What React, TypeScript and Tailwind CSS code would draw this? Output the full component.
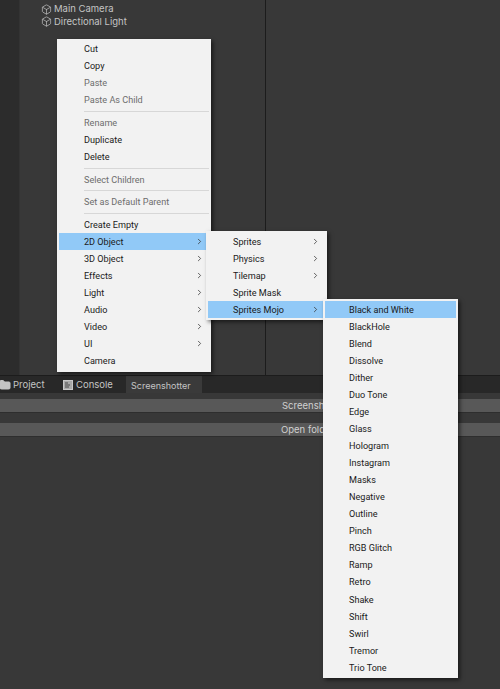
import { Box, Folder, ChevronRight } from 'lucide-react';

type Row = { label: string; dim?: boolean; arrow?: boolean; active?: boolean } | 'sep' | 'sep-thin';

const mainMenu: Row[] = [
  { label: 'Cut' },
  { label: 'Copy' },
  { label: 'Paste', dim: true },
  { label: 'Paste As Child', dim: true },
  'sep',
  { label: 'Rename', dim: true },
  { label: 'Duplicate' },
  { label: 'Delete' },
  'sep',
  { label: 'Select Children', dim: true },
  'sep-thin',
  { label: 'Set as Default Parent', dim: true },
  'sep',
  { label: 'Create Empty' },
  { label: '2D Object', arrow: true, active: true },
  { label: '3D Object', arrow: true },
  { label: 'Effects', arrow: true },
  { label: 'Light', arrow: true },
  { label: 'Audio', arrow: true },
  { label: 'Video', arrow: true },
  { label: 'UI', arrow: true },
  { label: 'Camera' },
];

const objectMenu: Row[] = [
  { label: 'Sprites', arrow: true },
  { label: 'Physics', arrow: true },
  { label: 'Tilemap', arrow: true },
  { label: 'Sprite Mask' },
  { label: 'Sprites Mojo', arrow: true, active: true },
];

const effectNames = [
  'Black and White', 'BlackHole', 'Blend', 'Dissolve', 'Dither', 'Duo Tone', 'Edge', 'Glass',
  'Hologram', 'Instagram', 'Masks', 'Negative', 'Outline', 'Pinch', 'RGB Glitch', 'Ramp',
  'Retro', 'Shake', 'Shift', 'Swirl', 'Tremor', 'Trio Tone',
];
const effectsMenu: Row[] = effectNames.map((label, i) => ({ label, active: i === 0 }));

function MenuRows({ rows, textLeft, rowHeight }: { rows: Row[]; textLeft: string; rowHeight: string }) {
  return (
    <>
      {rows.map((row, i) =>
        row === 'sep' || row === 'sep-thin' ? (
          <div key={i} className={`${row === 'sep' ? 'h-[6px]' : 'h-[5px]'} flex items-center pl-[27px] pr-[2px]`}>
            <div className="h-px w-full bg-[#d7d7d7]" />
          </div>
        ) : (
          <div
            key={i}
            className={`${rowHeight} mx-[2px] flex items-center justify-between ${row.active ? 'bg-[#91c9f7]' : ''} ${row.dim ? 'text-[#6d6d6d]' : 'text-[#1a1a1a]'} ${textLeft}`}
          >
            <span className="pt-[2px]">{row.label}</span>
            {row.arrow && <ChevronRight className="w-[9px] h-[9px] mr-[5px] text-[#333333]" strokeWidth={2} />}
          </div>
        ),
      )}
    </>
  );
}

function Menu({ rows, className, textLeft, rowHeight = 'h-[17px]' }: { rows: Row[]; className: string; textLeft: string; rowHeight?: string }) {
  return (
    <div className={`absolute bg-[#f2f2f2] text-[9.1px] font-['Roboto',sans-serif] shadow-[2px_2px_4px_rgba(0,0,0,0.55)] ${className}`}>
      <MenuRows rows={rows} textLeft={textLeft} rowHeight={rowHeight} />
    </div>
  );
}

function SceneItem({ name }: { name: string }) {
  return (
    <div className="h-[12.5px] flex items-center gap-[2px] pl-[21px]">
      <Box className="w-[11px] h-[11px] text-[#c4c4c4]" strokeWidth={1.5} />
      <span>{name}</span>
    </div>
  );
}

function ConsoleIcon() {
  return (
    <svg width="10" height="10" viewBox="0 0 10 10" className="shrink-0">
      <rect x="0.5" y="0.5" width="9" height="9" fill="#a8a8a8" stroke="#c8c8c8" />
      <path d="M2 3h3M2 5h5M2 7h4" stroke="#4a4a4a" strokeWidth="1" />
    </svg>
  );
}

export default function App() {
  return (
    <div className="relative w-[500px] h-[689px] overflow-hidden bg-[#383838] text-[9.5px] text-[#c4c4c4] font-['Inter',sans-serif]">
      <div className="flex h-[375px]">
        <div className="w-[19px] bg-[#2c2c2c]" />
        <div className="w-[246px] pt-[3px] border-l border-[#333333]">
          <SceneItem name="Main Camera" />
          <SceneItem name="Directional Light" />
        </div>
        <div className="w-px bg-[#1c1c1c]" />
        <div className="flex-1 bg-[#383838]" />
      </div>

      <div className="h-[18px] bg-[#282828] flex items-end border-t border-[#1c1c1c]">
        <div className="h-[17px] w-[64px] flex items-center gap-[2px] -ml-[1px]">
          <Folder className="w-[12px] h-[12px] text-[#c4c4c4] fill-[#c4c4c4]" />
          <span className="pt-[2px]">Project</span>
        </div>
        <div className="h-[17px] w-[63px] flex items-center gap-[3px]">
          <ConsoleIcon />
          <span className="pt-[2px]">Console</span>
        </div>
        <div className="h-[17px] w-[76px] flex items-center pl-[5px] pt-[2px] text-[9px] bg-[#3a3a3a]">Screenshotter</div>
      </div>

      <div className="flex flex-col gap-[10px] pt-[6px]">
        <div className="h-[14px] bg-[#585858] border-b border-[#2e2e2e] pl-[282px] pt-[1px] flex items-center text-[#d0d0d0]">Screenshot</div>
        <div className="h-[14px] bg-[#585858] border-b border-[#2e2e2e] pl-[281px] pt-[1px] flex items-center text-[#d0d0d0]">Open folder</div>
      </div>

      <Menu rows={mainMenu} className="left-[57px] top-[39px] w-[154px] h-[333px] pt-[1px]" textLeft="pl-[25px]" />
      <Menu rows={objectMenu} className="left-[206px] top-[231px] w-[121px] h-[89px] pt-[2px]" textLeft="pl-[25px]" />
      <Menu rows={effectsMenu} className="left-[323px] top-[299px] w-[135px] h-[379px] pt-[2px]" textLeft="pl-[24px]" rowHeight="h-[17.05px]" />
    </div>
  );
}
